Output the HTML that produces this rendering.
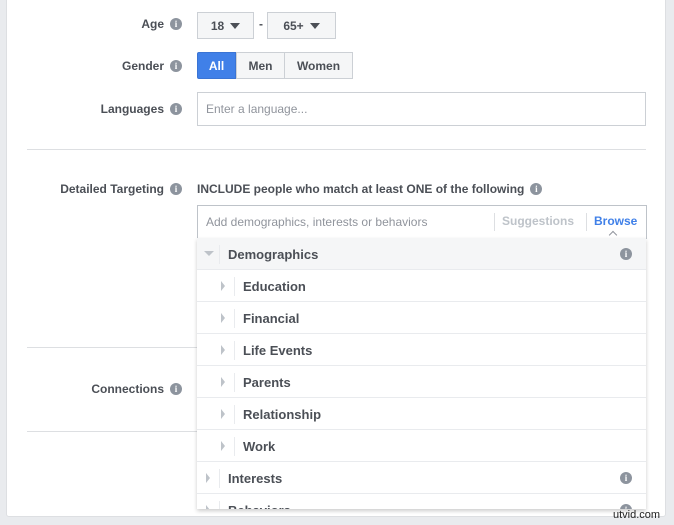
<!DOCTYPE html>
<html><head><style>
body{margin:0;width:674px;height:525px;background:#e9ebee;font-family:"Liberation Sans",Helvetica,Arial,sans-serif;position:relative;overflow:hidden;font-size:12px;color:#4b4f56}
.card{position:absolute;left:6px;top:-4px;width:660px;height:521px;background:#fff;border:1px solid #dddfe2;border-radius:3px;box-sizing:border-box}
.abs{position:absolute}
.lbl{position:absolute;right:492px;font-weight:bold;color:#4b4f56;font-size:12px;display:flex;align-items:center;white-space:nowrap}
.i{display:inline-block;width:12px;height:12px;border-radius:50%;background:#8d949e;color:#fff;font-size:9px;font-weight:bold;text-align:center;line-height:12px;margin-left:6px;font-family:"Liberation Serif",serif}
.btn{position:absolute;background:#f5f6f7;border:1px solid #ccd0d5;box-sizing:border-box;font-weight:bold;color:#4b4f56;display:flex;align-items:center;justify-content:center}
.tri{display:inline-block;width:0;height:0;border-left:5px solid transparent;border-right:5px solid transparent;border-top:6px solid #4b4f56;margin-left:6px}
.hr{position:absolute;height:1px;background:#dddfe2}
.row{position:absolute;left:197px;width:449px;height:32px;border-bottom:1px solid #e9ebee;box-sizing:border-box;background:#fff;font-weight:bold;color:#4b4f56;font-size:13px}
.row .t{position:absolute;top:9px}
.row .d{position:absolute;top:7px;width:1px;height:19px;background:#e9ebee}
.rt{position:absolute;top:11px;width:0;height:0;border-top:5px solid transparent;border-bottom:5px solid transparent;border-left:4px solid #bec3c9}
.row .i{position:absolute;right:14px;top:10px;margin:0}
</style></head><body>
<div class="card"></div>
<div class="lbl" style="top:17px">Age<span class="i">i</span></div>
<div class="btn" style="left:197px;top:12px;width:57px;height:27px">18<span class="tri"></span></div>
<div class="abs" style="left:259px;top:17px;font-weight:bold">-</div>
<div class="btn" style="left:267px;top:12px;width:69px;height:27px">65+<span class="tri"></span></div>
<div class="lbl" style="top:59px">Gender<span class="i">i</span></div>
<div class="btn" style="left:197px;top:52px;width:39px;height:27px;background:#4080e8;border-color:#3a74d4;color:#fff;border-radius:2px 0 0 2px">All</div>
<div class="btn" style="left:236px;top:52px;width:49px;height:27px">Men</div>
<div class="btn" style="left:284px;top:52px;width:69px;height:27px">Women</div>
<div class="lbl" style="top:102px">Languages<span class="i">i</span></div>
<div class="abs" style="left:197px;top:92px;width:449px;height:34px;border:1px solid #ccd0d5;box-sizing:border-box;color:#90949c;padding:9px 0 0 8px">Enter a language...</div>
<div class="hr" style="left:27px;top:149px;width:619px"></div>
<div class="lbl" style="top:182px">Detailed Targeting<span class="i">i</span></div>
<div class="abs" style="left:197px;top:182px;font-weight:bold;display:flex;align-items:center">INCLUDE people who match at least ONE of the following<span class="i">i</span></div>
<div class="abs" style="left:197px;top:205px;width:450px;height:34px;border:1px solid #bec3c9;box-sizing:border-box;color:#90949c">
<span class="abs" style="left:8px;top:9px">Add demographics, interests or behaviors</span>
<span class="abs" style="left:296px;top:7px;width:1px;height:18px;background:#dddfe2"></span>
<span class="abs" style="left:304px;top:8px;font-weight:bold;color:#bec3c9">Suggestions</span>
<span class="abs" style="left:388px;top:7px;width:1px;height:18px;background:#dddfe2"></span>
<span class="abs" style="left:396px;top:8px;font-weight:bold;color:#4080e8">Browse</span>
<span class="abs" style="left:412px;top:26px;width:5px;height:5px;border-left:1px solid #90949c;border-top:1px solid #90949c;transform:rotate(45deg)"></span>
</div>
<div class="hr" style="left:27px;top:347px;width:170px"></div>
<div class="hr" style="left:27px;top:431px;width:170px"></div>
<div class="lbl" style="top:382px">Connections<span class="i">i</span></div>
<div class="abs" style="left:197px;top:238px;width:449px;height:271px;box-shadow:0 2px 4px rgba(0,0,0,.2);overflow:hidden">
<div class="row" style="left:0;top:0;background:#f5f6f7"><span class="abs" style="left:7px;top:13px;border-left:5px solid transparent;border-right:5px solid transparent;border-top:5px solid #bec3c9"></span><span class="d" style="left:22px"></span><span class="t" style="left:31px">Demographics</span><span class="i">i</span></div>
<div class="row" style="left:0;top:32px"><span class="rt" style="left:24px"></span><span class="d" style="left:37px"></span><span class="t" style="left:46px">Education</span></div>
<div class="row" style="left:0;top:64px"><span class="rt" style="left:24px"></span><span class="d" style="left:37px"></span><span class="t" style="left:46px">Financial</span></div>
<div class="row" style="left:0;top:96px"><span class="rt" style="left:24px"></span><span class="d" style="left:37px"></span><span class="t" style="left:46px">Life Events</span></div>
<div class="row" style="left:0;top:128px"><span class="rt" style="left:24px"></span><span class="d" style="left:37px"></span><span class="t" style="left:46px">Parents</span></div>
<div class="row" style="left:0;top:160px"><span class="rt" style="left:24px"></span><span class="d" style="left:37px"></span><span class="t" style="left:46px">Relationship</span></div>
<div class="row" style="left:0;top:192px"><span class="rt" style="left:24px"></span><span class="d" style="left:37px"></span><span class="t" style="left:46px">Work</span></div>
<div class="row" style="left:0;top:224px"><span class="rt" style="left:9px"></span><span class="d" style="left:22px"></span><span class="t" style="left:31px">Interests</span><span class="i">i</span></div>
<div class="row" style="left:0;top:256px"><span class="rt" style="left:9px"></span><span class="d" style="left:22px"></span><span class="t" style="left:31px">Behaviors</span><span class="i">i</span></div>
</div>
<div class="abs" style="left:613px;top:509px;font-size:11px;color:#222">utvid.com</div>
</body></html>
